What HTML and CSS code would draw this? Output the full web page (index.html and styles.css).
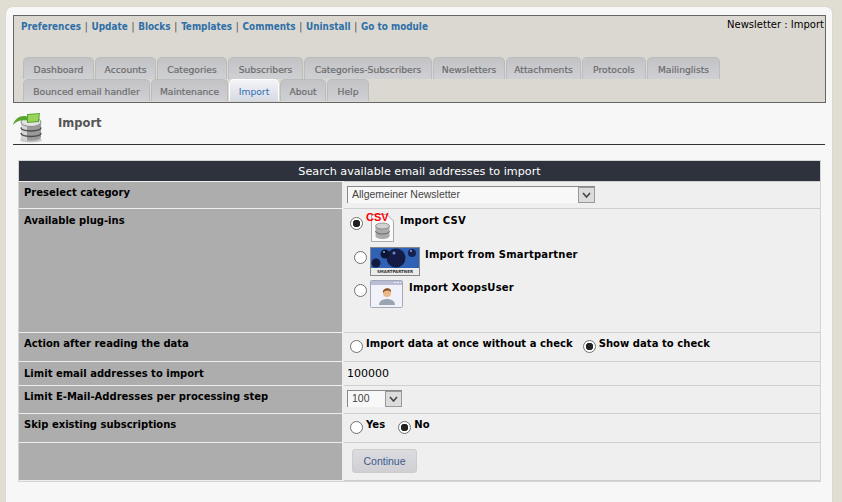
FILE: index.html
```html
<!DOCTYPE html>
<html lang="en">
  <head>
    <meta charset="UTF-8" />
    <title>Newsletter : Import</title>
    <link rel="stylesheet" href="styles.css">
  </head>
  <body>
    <div class="page">
      <div class="admin-header">
        <div class="top-row">
          <div class="top-links">
            <a href="#">Preferences</a> | <a href="#">Update</a> | <a href="#">Blocks</a> | <a href="#">Templates</a> | <a href="#">Comments</a> | <a href="#">Uninstall</a> | <a href="#">Go to module</a>
          </div>
          <div class="crumb">Newsletter : Import</div>
        </div>
        <ul class="tabs tabs-first">
          <li>Dashboard</li>
          <li>Accounts</li>
          <li>Categories</li>
          <li>Subscribers</li>
          <li>Categories-Subscribers</li>
          <li>Newsletters</li>
          <li>Attachments</li>
          <li>Protocols</li>
          <li>Mailinglists</li>
        </ul>
        <ul class="tabs tabs-second">
          <li>Bounced email handler</li>
          <li>Maintenance</li>
          <li class="current">Import</li>
          <li>About</li>
          <li>Help</li>
        </ul>
      </div>

      <div class="page-title">
        <svg class="title-icon" width="30" height="30" viewBox="0 0 30 30">
          <ellipse cx="18" cy="27" rx="11" ry="2.5" fill="#999" opacity="0.5"/>
          <path d="M8 9 V24 C8 29 28 29 28 24 V9Z" fill="#9a9a9a"/>
          <path d="M8 9 V24 C8 26 11 27.5 14 28 V12Z" fill="#d4d4d4"/>
          <path d="M8 14.5 C8 19 28 19 28 14.5 M8 20 C8 24.5 28 24.5 28 20" fill="none" stroke="#4c4c4c" stroke-width="1.5"/>
          <ellipse cx="18" cy="9" rx="10" ry="4.5" fill="#e4e4e4" stroke="#8a8a8a"/>
          <path d="M0 12 C2 5 8 2 14 3.5 L14 1 L27 0 L26 9 L14 10 L14 7.5 C8 6.5 3 8 0 12Z" fill="#58a52f"/>
          <path d="M15 2 L26 1 L25 8 L15 9Z" fill="#9ad35c"/>
        </svg>
        <h1>Import</h1>
      </div>

      <table class="form-table">
        <colgroup>
          <col class="label-col">
          <col>
        </colgroup>
        <tr class="head-row"><th colspan="2">Search available email addresses to import</th></tr>
        <tr class="row-category">
          <td class="label">Preselect category</td>
          <td>
            <div class="select select-wide"><span class="select-value">Allgemeiner Newsletter</span><span class="select-arrow"><svg width="9" height="6" viewBox="0 0 9 6"><path d="M1 1 L4.5 5 L8 1" fill="none" stroke="#444" stroke-width="1.6"/></svg></span></div>
          </td>
        </tr>
        <tr class="row-plugins">
          <td class="label">Available plug-ins</td>
          <td>
            <div class="plugin plugin-csv">
              <span class="radio checked"></span>
              <span class="csv-icon">
                <svg width="28" height="29" viewBox="0 0 28 29">
                  <path d="M5.5 1.5 H21 L27.5 8 V28.5 H5.5Z" fill="#fafafa" stroke="#aaa"/>
                  <path d="M9.5 13 V23 C9.5 27 23.5 27 23.5 23 V13Z" fill="#ababab"/>
                  <path d="M9.5 18 C9.5 22 23.5 22 23.5 18" fill="none" stroke="#666"/>
                  <ellipse cx="16.5" cy="13" rx="7" ry="3" fill="#d2d2d2" stroke="#777" stroke-width="0.7"/>
                </svg>
                <b class="csv-tag">CSV</b>
              </span>
              <b>Import CSV</b>
            </div>
            <div class="plugin plugin-sp">
              <span class="radio"></span>
              <svg class="plugin-icon" width="50" height="29" viewBox="0 0 50 29">
                <rect x="0.5" y="0.5" width="49" height="28" fill="#ececec" stroke="#888"/>
                <rect x="1" y="1" width="48" height="20" fill="#2f62b4"/>
                <circle cx="26" cy="11" r="9.5" fill="#141c46"/>
                <circle cx="15" cy="7" r="4.5" fill="#0e1533"/>
                <circle cx="42" cy="6" r="4" fill="#16204f"/>
                <circle cx="6" cy="16" r="4.5" fill="#121a42"/>
                <circle cx="24" cy="6" r="1.5" fill="#6f86c4"/>
                <circle cx="14" cy="5" r="1" fill="#8ea2d8"/>
                <circle cx="41" cy="4" r="1" fill="#8ea2d8"/>
                <text class="sp-label" x="25" y="26" text-anchor="middle">SMARTPARTNER</text>
              </svg>
              <b>Import from Smartpartner</b>
            </div>
            <div class="plugin plugin-user">
              <span class="radio"></span>
              <svg class="plugin-icon" width="33" height="28" viewBox="0 0 33 28">
                <rect x="0.5" y="0.5" width="32" height="27" rx="1" fill="#f0f1f9" stroke="#a6a8b8"/>
                <rect x="1" y="1" width="31" height="4" fill="#b9bdd6"/>
                <path d="M24 2.5 H31" stroke="#eef" stroke-dasharray="2 1"/>
                <path d="M9 25 C9 17 25 17 25 25Z" fill="#9aa4b0"/>
                <circle cx="17" cy="13" r="4" fill="#e8b888"/>
                <path d="M13 13 C12 7 22 7 21 12 C19 10 15 10 13 13Z" fill="#8a5020"/>
              </svg>
              <b>Import XoopsUser</b>
            </div>
          </td>
        </tr>
        <tr class="row-action">
          <td class="label">Action after reading the data</td>
          <td>
            <div class="choices">
              <span class="radio"></span><b>Import data at once without a check</b>
              <span class="radio checked"></span><b>Show data to check</b>
            </div>
          </td>
        </tr>
        <tr class="row-limit">
          <td class="label">Limit email addresses to import</td>
          <td class="plain">100000</td>
        </tr>
        <tr class="row-step">
          <td class="label">Limit E-Mail-Addresses per processing step</td>
          <td>
            <div class="select select-small"><span class="select-value">100</span><span class="select-arrow"><svg width="9" height="6" viewBox="0 0 9 6"><path d="M1 1 L4.5 5 L8 1" fill="none" stroke="#444" stroke-width="1.6"/></svg></span></div>
          </td>
        </tr>
        <tr class="row-skip">
          <td class="label">Skip existing subscriptions</td>
          <td>
            <div class="choices">
              <span class="radio"></span><b>Yes</b>
              <span class="radio checked"></span><b>No</b>
            </div>
          </td>
        </tr>
        <tr class="row-submit">
          <td class="label"></td>
          <td><button type="button" class="btn">Continue</button></td>
        </tr>
      </table>
    </div>
  </body>
</html>
```

FILE: styles.css
```css
html,
body {
  height: 100%;
}

body {
  margin: 0;
  padding: 7px 10px 0 6px;
  box-sizing: border-box;
  overflow: hidden;
  background-color: #e0ddd3;
  font-family: "DejaVu Sans", Verdana, sans-serif;
  font-size: 11px;
  color: #000;
}

.page {
  height: 520px;
  padding: 8px 6px 0 7px;
  box-sizing: border-box;
  background-color: #f7f7f7;
  border-radius: 6px 6px 0 0;
  box-shadow: 0 0 1px #bbb;
}

.admin-header {
  height: 88px;
  box-sizing: border-box;
  padding-left: 9px;
  background-color: #dbd8d1;
  border: 1px solid #666;
}

.top-row {
  display: flex;
  justify-content: space-between;
  height: 41px;
}

.top-links {
  padding: 4px 0 0 0;
  margin-left: -3px;
  font-family: "DejaVu Sans Condensed", "DejaVu Sans", sans-serif;
  font-stretch: condensed;
  font-size: 9.85px;
  line-height: 13px;
  color: #444;
}

.top-links a {
  margin: 0 1px;
  color: #2f6fa7;
  font-weight: bold;
  text-decoration: none;
}

.crumb {
  padding-top: 2px;
  padding-right: 1px;
  font-size: 10px;
  line-height: 13px;
}

.tabs {
  display: grid;
  column-gap: 1px;
  height: 22px;
  margin: 0;
  padding: 0;
  list-style: none;
}

.tabs-first {
  grid-template-columns: 71px 61px 70px 75px 128px 72px 75px 64px 73px;
}

.tabs-second {
  grid-template-columns: 127px 77px 50px 46px 42px;
}

.tabs li {
  display: flex;
  align-items: center;
  justify-content: center;
  box-sizing: border-box;
  height: 22px;
  padding-top: 1px;
  background: linear-gradient(#c3c3c6, #cfd0d4);
  border: 1px solid #bcbcbc;
  border-bottom: 0;
  border-radius: 5px 5px 0 0;
  font-size: 9.2px;
  white-space: nowrap;
  color: #666;
  -webkit-text-stroke: 0.2px #777;
}

.tabs li.current {
  background: linear-gradient(#f4f4f6, #d5dae4);
  border-color: #fff;
  color: #2a6bb0;
  -webkit-text-stroke: 0;
}

.page-title {
  display: flex;
  align-items: flex-start;
  height: 42px;
  border-bottom: 1px solid #333;
  margin-bottom: 16px;
  padding-top: 10px;
  box-sizing: border-box;
  margin-right: 1px;
}

.title-icon {
  margin-right: 15px;
}

.page-title h1 {
  margin: 2px 0 0 0;
  font-size: 11.5px;
  line-height: 16px;
  font-weight: bold;
  color: #555;
}

.form-table {
  width: 801px;
  margin-left: 6px;
  border-collapse: collapse;
  table-layout: fixed;
  background-color: #efefef;
  outline: 1px solid #d4d4d4;
}

.label-col {
  width: 324px;
}

.form-table th {
  height: 20px;
  padding: 0;
  background-color: #2e323c;
  font-size: 11.2px;
  font-weight: normal;
  color: #fff;
}

.form-table td {
  padding: 4px 5px 4px 3px;
  vertical-align: top;
  border-top: 1px solid #cfcfcf;
  border-bottom: 1px solid #cfcfcf;
  line-height: 14px;
  font-size: 10px;
}

.form-table td.label {
  padding-left: 5px;
  background-color: #adadad;
  border-top: 1px solid #eee;
  border-bottom: 1px solid #eee;
  border-right: 2px solid #eee;
  font-weight: bold;
}

.form-table td.plain {
  font-size: 11px;
}

.row-category td {
  height: 18px;
}

.row-plugins td {
  height: 114px;
}

.row-action td {
  height: 20px;
}

.row-limit td {
  height: 14px;
  padding-top: 5px;
}

.row-limit td.label {
  padding-top: 5px;
}

.row-step td {
  height: 19px;
}

.row-skip td {
  height: 20px;
}

.row-submit td {
  height: 29px;
}

.row-plugins td.label {
  padding-top: 5px;
}

.select {
  display: flex;
  box-sizing: border-box;
  height: 17px;
  background-color: #fff;
  border-top: 1px solid #888;
  border-left: 1px solid #888;
  color: #444;
}

.select-wide {
  width: 248px;
}

.select-small {
  width: 55px;
}

.select-value {
  flex: 1;
  padding-left: 4px;
  line-height: 15px;
  font-family: "Liberation Sans", Arial, sans-serif;
  font-size: 10.5px;
  background-color: #f8f8f8;
}

.select-arrow {
  display: flex;
  align-items: center;
  justify-content: center;
  box-sizing: border-box;
  width: 17px;
  background-color: #dcdcdc;
  border: 1px solid #999;
}

.radio {
  display: inline-block;
  box-sizing: border-box;
  flex: none;
  width: 13px;
  height: 13px;
  background-color: #fff;
  border: 1px solid #707070;
  border-radius: 50%;
}

.radio.checked {
  background: radial-gradient(circle, #222 0 3.5px, #fff 4px);
}

.plugin {
  display: flex;
  align-items: flex-start;
}

.plugin b {
  letter-spacing: 0.2px;
}

.plugin-icon {
  flex: none;
  margin-left: 3px;
}

.plugin-csv {
  height: 34px;
  margin-left: 3px;
}

.plugin-csv .radio {
  margin-top: 4px;
}

.csv-icon {
  position: relative;
  flex: none;
  width: 28px;
  height: 29px;
  margin-left: 3px;
}

.plugin .csv-tag {
  position: absolute;
  left: 0;
  top: -3px;
  font-family: "Liberation Sans", Arial, sans-serif;
  font-size: 11px;
  letter-spacing: 0;
  color: #f00;
}

.plugin-csv > b {
  margin-left: 6px;
  margin-top: 1px;
}

.plugin-sp {
  height: 33px;
  margin-left: 7px;
}

.plugin-sp .radio {
  margin-top: 4px;
}

.plugin-sp > b {
  margin-left: 5px;
  margin-top: 1px;
}

.plugin-user {
  margin-left: 7px;
}

.plugin-user .radio {
  margin-top: 4px;
}

.plugin-user > b {
  margin-left: 6px;
  margin-top: 1px;
}

.sp-label {
  font-size: 4px;
  font-weight: bold;
  fill: #333;
}

.choices {
  display: flex;
  align-items: flex-start;
  padding-left: 3px;
}

.choices b {
  letter-spacing: 0.05px;
}

.choices .radio {
  margin-top: 3px;
  margin-right: 3px;
}

.choices b + .radio {
  margin-left: 13px;
}

.row-action .choices b + .radio {
  margin-left: 10px;
}

.btn {
  display: block;
  width: 65px;
  height: 24px;
  margin: 2px 0 0 5px;
  padding: 0;
  background: linear-gradient(#dcdce0, #cfcfd4);
  border: 1px solid #ccc;
  border-radius: 3px;
  font-family: "Liberation Sans", Arial, sans-serif;
  font-size: 10.5px;
  color: #3a5a8c;
}
```
